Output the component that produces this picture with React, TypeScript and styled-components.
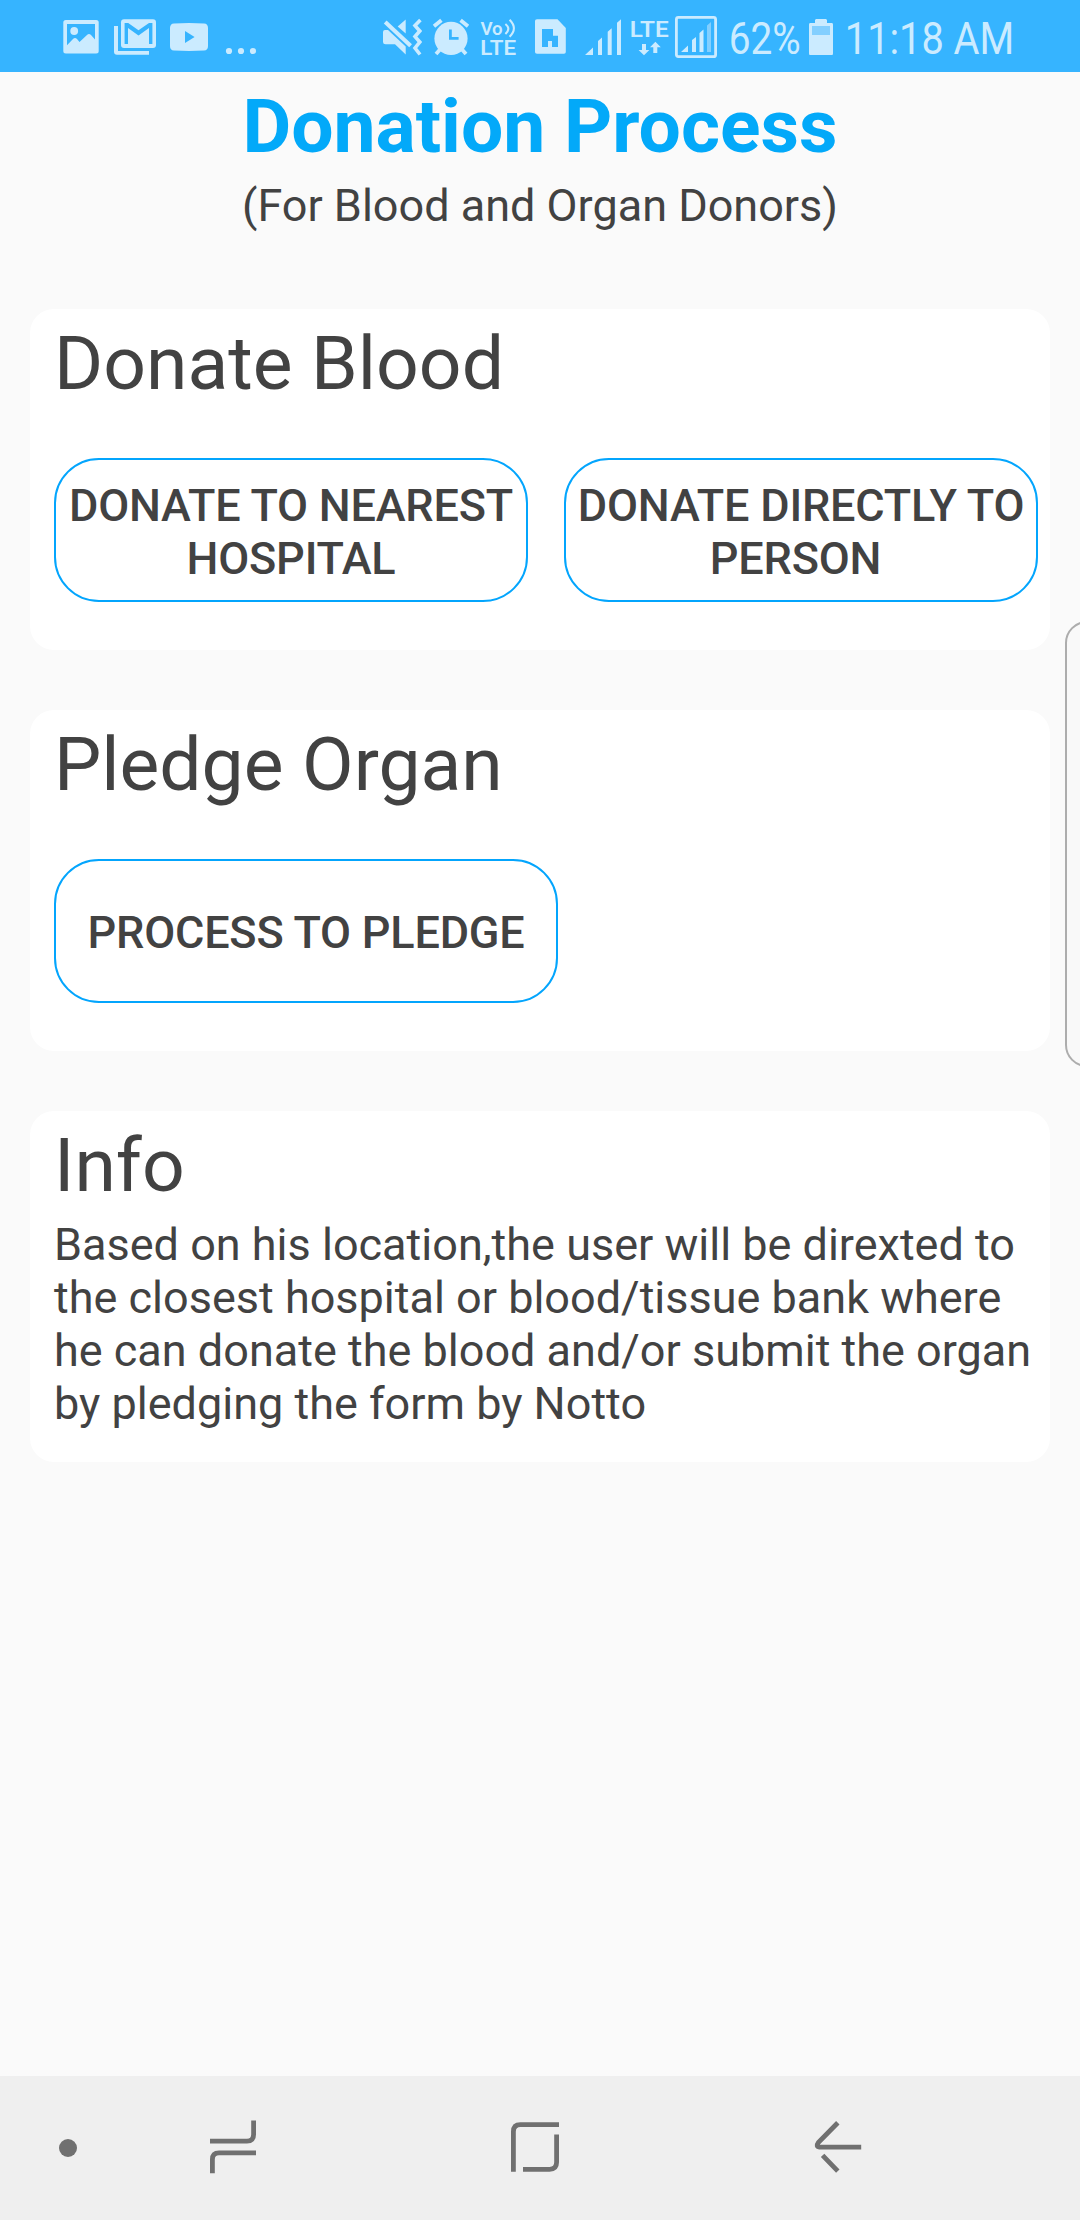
import React from 'react';
import styled, { createGlobalStyle } from 'styled-components';

const INK = '#424242';
const BAR = '#36b4ff';
const GLYPH = '#cbebff';
const DIM = '#83cfff';

const GlobalStyle = createGlobalStyle`
  * { box-sizing: border-box; }
  body {
    margin: 0;
    background: #fafafa;
    font-family: Roboto, "Liberation Sans", sans-serif;
    color: ${INK};
  }
`;

const Screen = styled.div`
  position: relative;
  display: flex;
  flex-direction: column;
  width: 1080px;
  height: 2220px;
  overflow: hidden;
  background: #fafafa;
`;

const StatusBar = styled.header`
  display: flex;
  flex: none;
  height: 72px;
  padding-left: 63px;
  background: ${BAR};
`;

const StatusIcon = styled.svg<{ $gap?: number }>`
  flex: none;
  display: block;
  margin-left: ${(p) => p.$gap ?? 0}px;
  fill: ${GLYPH};
  font-family: Roboto, "Liberation Sans", sans-serif;
`;

const Content = styled.main`
  flex: 1;
  display: flex;
  flex-direction: column;
  padding: 10px 30px 0;
`;

const Heading = styled.h1`
  margin: 0;
  font-size: 75px;
  line-height: 88px;
  font-weight: 700;
  color: #03a9f9;
  text-align: center;
`;

const Subtitle = styled.p`
  margin: 9px 0 77px;
  font-size: 45px;
  line-height: 53px;
  text-align: center;
`;

const Cards = styled.div`
  display: flex;
  flex-direction: column;
  gap: 60px;
`;

const Card = styled.section<{ $height: number }>`
  height: ${(p) => p.$height}px;
  padding: 10px 12px 0 24px;
  border-radius: 24px;
  background: #fff;
`;

const CardTitle = styled.h2`
  margin: 0;
  font-size: 75px;
  line-height: 88px;
  font-weight: 400;
`;

const ButtonRow = styled.div`
  display: flex;
  gap: 36px;
  margin-top: 51px;
`;

const PillButton = styled.button<{ $width: number; $singleLine?: boolean }>`
  width: ${(p) => p.$width}px;
  height: 144px;
  padding: ${(p) => (p.$singleLine ? 3 : 4)}px 0 0;
  border: 2px solid #03a5fd;
  border-radius: 45px;
  background: #fff;
  color: ${INK};
  font-family: inherit;
  font-size: 45px;
  line-height: 53px;
  font-weight: 500;
  letter-spacing: -0.2px;
  text-transform: uppercase;
  white-space: pre-line;
`;

const InfoText = styled.p`
  margin: 9px 0 0;
  font-size: 45px;
  line-height: 53px;
  white-space: pre-line;
`;

const EdgeHandle = styled.div`
  position: absolute;
  left: 1065px;
  top: 621px;
  width: 60px;
  height: 446px;
  border: 2px solid #adadad;
  border-radius: 22px;
  background: #f9f9f9;
`;

const NavBar = styled.nav`
  display: flex;
  flex: none;
  align-items: center;
  height: 144px;
  background: #efefef;
`;

const NavIcon = styled.svg<{ $gap: number }>`
  flex: none;
  margin-left: ${(p) => p.$gap}px;
  fill: none;
  stroke: #707070;
  stroke-width: 4.8;
`;

type IconProps = { x: number; w: number; gap?: number; children: React.ReactNode };

const Icon = ({ x, w, gap, children }: IconProps) => (
  <StatusIcon $gap={gap} width={w} height={72} viewBox={`${x} 0 ${w} 72`}>
    {children}
  </StatusIcon>
);

const StatusIcons = () => (
  <StatusBar>
    <Icon x={63} w={36}>
      <rect x="63.3" y="20" width="35.4" height="33.4" rx="2.5" />
      <path fill={BAR} d="M67 24H95V39.5L91 35Q89 33 87 35L79.5 42L77 39Q75 37 73 39L67 45.3Z" />
      <circle cx="74.2" cy="31" r="3.9" />
    </Icon>
    <Icon x={114} w={42} gap={15}>
      <path d="M114 26H118V51H149V54.7H117Q114 54.7 114 51.7Z" />
      <rect x="121" y="19.2" width="35" height="28.8" rx="3" />
      <path fill={BAR} d="M124.6 23H128.2L138.5 30.2L149 23H152.4V44H149V28L138.5 35.4L128 28V44H124.6Z" />
    </Icon>
    <Icon x={169} w={40} gap={13}>
      <path d="M174 23.4Q189 22.6 204 23.4Q208 23.6 208 28V46Q208 50.4 204 50.6Q189 51.4 174 50.6Q170 50.4 170 46V28Q170 23.6 174 23.4Z" />
      <path fill={BAR} d="M185 31L194.6 37L185 43Z" />
    </Icon>
    <Icon x={225} w={32} gap={16}>
      <circle cx="229" cy="51" r="3.1" />
      <circle cx="241" cy="51" r="3.1" />
      <circle cx="253" cy="51" r="3.1" />
    </Icon>
    <Icon x={382} w={40} gap={125}>
      <path d="M385 30H388L405.7 46.5V54.5L395 44.3H385.5Q383 44.3 383 42V32Q383 30 385 30Z" />
      <path d="M405.7 19.5V33.5L397.7 26.5Z" />
      <path stroke={GLYPH} strokeWidth="4" fill="none" d="M385.2 22L410.6 45.8" />
      <path stroke={GLYPH} strokeWidth="3.6" fill="none" d="M420.4 20L415 25.6L419.8 31L415 36.6L419.8 42L415 48L420 54.5" />
    </Icon>
    <Icon x={432} w={38} gap={10}>
      <circle cx="451" cy="38.4" r="16.6" />
      <path stroke={GLYPH} strokeWidth="3.8" fill="none" d="M434 26.3L441.4 20.3M460.6 20.3L468 26.3M440 49.5L436 54M462 49.5L466 54" />
      <path fill={BAR} d="M449 29.4H451.8V37H458.6V39.8H449Z" />
    </Icon>
    <Icon x={478} w={42} gap={8}>
      <text x="480.4" y="34.6" fontSize="18.5" fontWeight="600" textLength="22.3" lengthAdjust="spacingAndGlyphs">Vo</text>
      <path stroke={GLYPH} strokeWidth="2.1" fill="none" d="M505.4 24Q511.3 28.5 505.4 34M509.6 19.7Q518.2 28.3 509.6 36.8" />
      <text x="480.2" y="54.9" fontSize="20.3" fontWeight="600" textLength="35.8" lengthAdjust="spacingAndGlyphs">LTE</text>
    </Icon>
    <Icon x={535} w={31} gap={15}>
      <path d="M537 19.3H557.5L565.8 28V52Q565.8 53.8 564 53.8H537Q535 53.8 535 52V21Q535 19.3 537 19.3Z" />
      <path fill={BAR} d="M542 29H553V35.7H558V47H552V41H548V47H542Z" />
    </Icon>
    <Icon x={585} w={37} gap={19}>
      <path d="M585 55L593 47.4V55ZM598 55V41L602 37.6V55ZM607.7 55V31.7L611.7 28.3V55ZM617 55V22.8L621 19.3V55Z" />
    </Icon>
    <Icon x={627} w={46} gap={5}>
      <text x="629.8" y="37" fontSize="22" fontWeight="600" textLength="39" lengthAdjust="spacingAndGlyphs">LTE</text>
      <path d="M642 44H646V50H649.4L644 55.2L638.6 50H642ZM655.4 41.8L660.8 47.3H657.3V53H653.3V47.3H650Z" />
    </Icon>
    <Icon x={675} w={42} gap={2}>
      <rect x="676.4" y="17.4" width="39.2" height="39.2" rx="2" fill="none" stroke={GLYPH} strokeWidth="2.8" />
      <path d="M681 52L688 45.4V52ZM692 52V40L696 37V52ZM699.5 52V33L703.5 29.6V52Z" />
      <path fill={DIM} d="M707 52V25.4L711 22V52Z" />
    </Icon>
    <Icon x={726} w={78} gap={9}>
      <text transform="translate(728.8 54) scale(0.862 1)" fontSize="45" textLength="83.5">62%</text>
    </Icon>
    <Icon x={809} w={24} gap={5}>
      <path d="M816 19H826L827 20V23H832Q833 23 833 24.5V53.5Q833 55 832 55H810Q809 55 809 53.5V24.5Q809 23 810 23H815V20Z" />
      <rect x="812" y="26" width="18" height="9" fill={DIM} />
    </Icon>
    <Icon x={842} w={176} gap={9}>
      <text transform="translate(844.8 54) scale(0.884 1)" fontSize="45" textLength="191.7">11:18 AM</text>
    </Icon>
  </StatusBar>
);

export default function App() {
  return (
    <>
      <GlobalStyle />
      <Screen>
        <StatusIcons />
        <Content>
          <Heading>Donation Process</Heading>
          <Subtitle>(For Blood and Organ Donors)</Subtitle>
          <Cards>
            <Card $height={341}>
              <CardTitle>Donate Blood</CardTitle>
              <ButtonRow>
                <PillButton $width={474}>{'Donate to nearest\nhospital'}</PillButton>
                <PillButton $width={474}>{'Donate directly to\nperson\u00a0'}</PillButton>
              </ButtonRow>
            </Card>
            <Card $height={341}>
              <CardTitle>Pledge Organ</CardTitle>
              <ButtonRow>
                <PillButton $width={504} $singleLine>Process to pledge</PillButton>
              </ButtonRow>
            </Card>
            <Card $height={351}>
              <CardTitle>Info</CardTitle>
              <InfoText>
                {'Based on his location,the user will be direxted to\nthe closest hospital or blood/tissue bank where\nhe can donate the blood and/or submit the organ\nby pledging the form by Notto'}
              </InfoText>
            </Card>
          </Cards>
        </Content>
        <NavBar>
          <NavIcon $gap={59} width={18} height={144} viewBox="59 2076 18 144">
            <circle cx="68" cy="2148" r="9" fill="#707070" stroke="none" />
          </NavIcon>
          <NavIcon $gap={133} width={46} height={144} viewBox="210 2076 46 144">
            <path d="M210 2141.1H247Q253.6 2141.1 253.6 2134.5V2120.5M256 2152.9H219Q212.4 2152.9 212.4 2159.5V2173.3" />
          </NavIcon>
          <NavIcon $gap={255} width={48} height={144} viewBox="511 2076 48 144">
            <path d="M559 2124.7H520.4Q513.4 2124.7 513.4 2131.7V2171.7M523 2169.3H549.6Q556.6 2169.3 556.6 2162.3V2134.5" />
          </NavIcon>
          <NavIcon $gap={255} width={48} height={144} viewBox="814 2076 48 144">
            <path d="M861.2 2147.2H819.5Q815.5 2146.5 818.3 2142.6L837.8 2122.7M822.6 2155.4L837.8 2171.2" />
          </NavIcon>
        </NavBar>
        <EdgeHandle />
      </Screen>
    </>
  );
}
